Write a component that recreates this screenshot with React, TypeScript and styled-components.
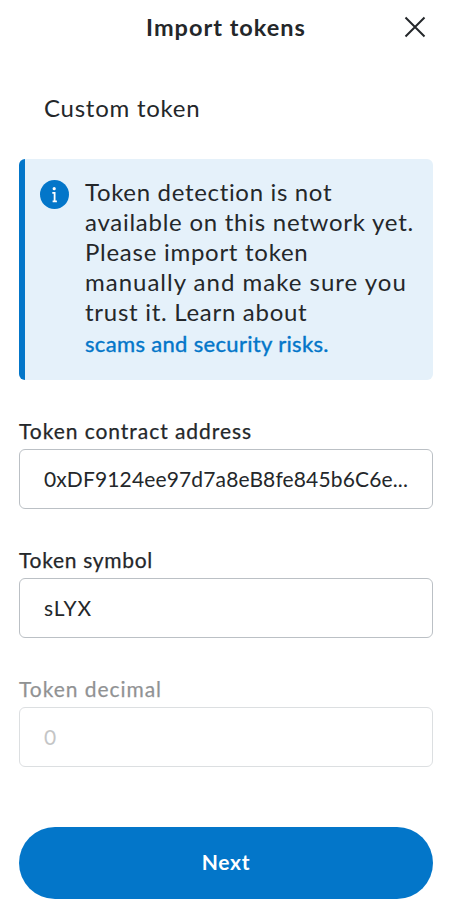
import React from "react";
import styled, { createGlobalStyle } from "styled-components";

const GlobalStyle = createGlobalStyle`
  *, *::before, *::after { box-sizing: border-box; }
  body {
    margin: 0;
    background: #fff;
    color: #24272a;
    font-family: Lato, "Liberation Sans", sans-serif;
  }
`;

const Page = styled.main`
  display: flex;
  flex-direction: column;
  height: 900px;
  padding: 0 21px 0 19px;
  overflow: hidden;
`;

const Header = styled.header`
  display: grid;
  grid-template-columns: 36px 1fr 36px;
  align-items: center;
  height: 54px;
`;

const Title = styled.h1`
  grid-column: 2;
  margin: 0;
  font-size: 23.5px;
  line-height: 30px;
  font-weight: 700;
  text-align: center;
  white-space: nowrap;
  letter-spacing: 1px;
`;

const CloseButton = styled.button`
  display: flex;
  justify-content: center;
  width: 36px;
  padding: 0;
  border: 0;
  background: none;
  color: #24272a;
`;

const TabHeading = styled.h2`
  margin: 39px 0 36px 25px;
  font-size: 24px;
  line-height: 30px;
  font-weight: 400;
  letter-spacing: 0.75px;
`;

const Notice = styled.section`
  display: flex;
  gap: 16px;
  height: 221px;
  padding: 18px 12px 0 15px;
  border-left: 6px solid #0376c9;
  border-radius: 6px;
  background: #e5f1fa;
`;

const NoticeIcon = styled.svg`
  flex: none;
  margin-top: 3px;
`;

const NoticeText = styled.p`
  margin: 0;
  font-size: 24px;
  line-height: 30px;
`;

const Line = styled.span<{ $spacing: number }>`
  display: block;
  white-space: nowrap;
  letter-spacing: ${({ $spacing }) => $spacing}px;
`;

const NoticeLink = styled.a<{ $spacing: number }>`
  display: block;
  color: #0376c9;
  font-size: 22px;
  line-height: 34px;
  -webkit-text-stroke: 0.4px #0376c9;
  white-space: nowrap;
  letter-spacing: ${({ $spacing }) => $spacing}px;
`;

const Form = styled.form`
  display: flex;
  flex-direction: column;
  gap: 39px;
  margin-top: 39px;
`;

const Field = styled.label<{ $disabled?: boolean }>`
  display: flex;
  flex-direction: column;
  height: 90px;
  opacity: ${({ $disabled }) => ($disabled ? 0.5 : 1)};
`;

const FieldLabel = styled.span<{ $spacing: number }>`
  height: 30px;
  font-size: 21px;
  line-height: 24px;
  -webkit-text-stroke: 0.25px currentColor;
  white-space: nowrap;
  letter-spacing: ${({ $spacing }) => $spacing}px;
`;

const Input = styled.input<{ $spacing: number }>`
  width: 100%;
  height: 60px;
  padding: 0 24px 2px;
  border: 1px solid #bbc0c5;
  border-radius: 6px;
  background: #fff;
  color: #24272a;
  font: 400 21px Lato, "Liberation Sans", sans-serif;
  letter-spacing: ${({ $spacing }) => $spacing}px;

  &:disabled { color: #8b8d8f; }
`;

const NextButton = styled.button`
  flex: none;
  height: 72px;
  margin-top: 60px;
  padding: 0 0 4px;
  border: 0;
  border-radius: 36px;
  background: #0376c9;
  color: #fff;
  font: 700 21px Lato, "Liberation Sans", sans-serif;
  letter-spacing: 0.7px;
`;

const noticeLines = [
  { text: "Token detection is not", spacing: 0.67 },
  { text: "available on this network yet.", spacing: 0.74 },
  { text: "Please import token", spacing: 0.73 },
  { text: "manually and make sure you", spacing: 1 },
  { text: "trust it. Learn about", spacing: 0.72 },
];

const fields = [
  { label: "Token contract address", labelSpacing: 0.95, value: "0xDF9124ee97d7a8eB8fe845b6C6e...", spacing: 0.14 },
  { label: "Token symbol", labelSpacing: 0.7, value: "sLYX", spacing: 0.9 },
  { label: "Token decimal", labelSpacing: 0.95, value: "0", spacing: 0, disabled: true },
];

export default function App() {
  return (
    <>
      <GlobalStyle />
      <Page>
        <Header>
          <Title>Import tokens</Title>
          <CloseButton aria-label="Close">
            <svg width="22" height="22" viewBox="0 0 22 22" fill="none" stroke="currentColor" strokeWidth="2">
              <path d="M1.5 1.5 20.5 20.5M20.5 1.5 1.5 20.5" />
            </svg>
          </CloseButton>
        </Header>
        <TabHeading>Custom token</TabHeading>
        <Notice>
          <NoticeIcon width="29" height="29" viewBox="0 0 29 29">
            <circle cx="14.5" cy="14.5" r="14.5" fill="#0376c9" />
            <circle cx="14.2" cy="8.7" r="1.6" fill="#fff" />
            <path d="M12.3 12.9h2.3v8.3M12.6 21.3h4.3" fill="none" stroke="#fff" strokeWidth="1.8" />
          </NoticeIcon>
          <NoticeText>
            {noticeLines.map(({ text, spacing }) => (
              <Line key={text} $spacing={spacing}>{text} </Line>
            ))}
            <NoticeLink $spacing={0.33}>scams and security risks.</NoticeLink>
          </NoticeText>
        </Notice>
        <Form>
          {fields.map((field) => (
            <Field key={field.label} $disabled={field.disabled}>
              <FieldLabel $spacing={field.labelSpacing}>{field.label}</FieldLabel>
              <Input $spacing={field.spacing} defaultValue={field.value} disabled={field.disabled} />
            </Field>
          ))}
        </Form>
        <NextButton>Next</NextButton>
      </Page>
    </>
  );
}
